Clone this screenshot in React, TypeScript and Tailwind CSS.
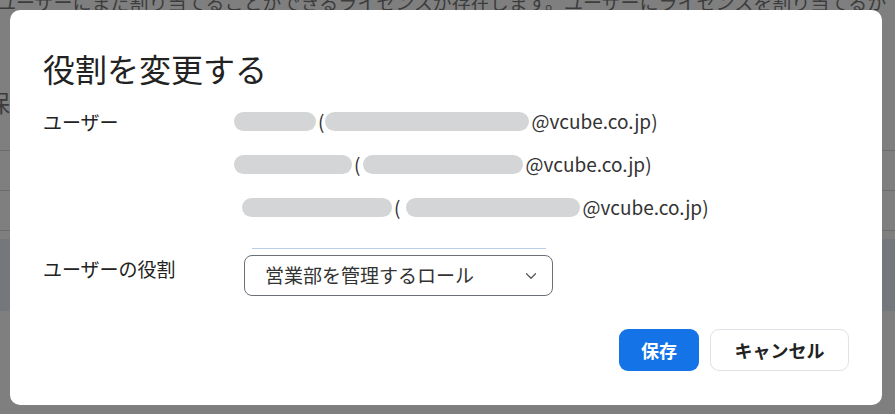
import { ChevronDown } from 'lucide-react';

// Dimmed page behind the dialog, then the "change role" dialog on top.

const font = { fontFamily: '"Noto Sans CJK JP", "Noto Sans", sans-serif' };

type UserRow = { indent: string; name: string; mail: string; gap: string };

const users: UserRow[] = [
  { indent: 'ml-[1px]', name: 'w-[82px]', mail: 'w-[204px]', gap: 'ml-[1px]' },
  { indent: 'ml-[1px]', name: 'w-[118px]', mail: 'w-[160px]', gap: 'ml-[3px]' },
  { indent: 'ml-[9px]', name: 'w-[150px]', mail: 'w-[174px]', gap: 'ml-[6px]' },
];

function Pill({ width, extra = '' }: { width: string; extra?: string }) {
  return <span className={`inline-block h-[19px] rounded-full bg-[#d4d5d7] ${width} ${extra}`} />;
}

function Backdrop() {
  return (
    <div className="flex h-full flex-col text-[#3c3c3c]">
      <div className="-mt-[10px] -ml-[3px] whitespace-nowrap text-[19px] leading-[24px]">
        ユーザーにまだ割り当てることができるライセンスが存在します。ユーザーにライセンスを割り当てるか
      </div>
      <div className="mt-[74px] -ml-[14px] text-[24px] leading-[28px]">保存</div>
      <div className="mt-[34px] h-px bg-[#6c6c6c]" />
      <div className="mt-[39px] h-px bg-[#6c6c6c]" />
      <div className="mt-[39px] h-px bg-[#6c6c6c]" />
      <div className="mt-[8px] h-[72px] bg-[#74777b]" />
    </div>
  );
}

export default function App() {
  return (
    <div className="relative h-[414px] w-[895px] overflow-hidden bg-[#7f7f7f]" style={font}>
      <Backdrop />

      <div className="absolute left-[10px] top-[10px] flex h-[395px] w-[872px] flex-col rounded-[10px] bg-white px-[33px] pt-[38px] text-[#222]">
        <h1 className="text-[32px] leading-[40px] font-normal">役割を変更する</h1>

        <div className="mt-[12px] flex">
          <div className="w-[190px] text-[19px] leading-[43px] text-[#222]">ユーザー</div>
          <div className="flex flex-col">
            {users.map((u, i) => (
              <div key={i} className={`flex h-[43px] items-center text-[19px] text-[#333] ${u.indent}`}>
                <Pill width={u.name} />
                <span className="ml-[2px]">(</span>
                <Pill width={u.mail} extra={u.gap} />
                <span className="ml-[2px]">@vcube.co.jp)</span>
              </div>
            ))}
          </div>
        </div>

        <div className="ml-[209px] mt-[19px] h-px w-[294px] bg-[#b9cde6]" />

        <div className="mt-[6px] flex items-start">
          <div className="w-[201px] pt-[2px] text-[19px] leading-[24px] text-[#222]">ユーザーの役割</div>
          <div className="flex h-[41px] w-[309px] items-center justify-between rounded-[8px] border border-[#6b6f76] pl-[20px] pr-[12px]">
            <span className="text-[19px] text-[#333]">営業部を管理するロール</span>
            <ChevronDown className="h-[18px] w-[18px] text-[#555]" strokeWidth={1.6} />
          </div>
        </div>

        <div className="mt-[33px] flex justify-end gap-[11px]">
          <button className="h-[42px] w-[80px] rounded-[9px] bg-[#1473e6] text-[18px] font-bold text-white">
            保存
          </button>
          <button className="h-[42px] w-[139px] rounded-[9px] border border-[#e1e1e8] bg-white text-[18px] font-bold text-[#222]">
            キャンセル
          </button>
        </div>
      </div>
    </div>
  );
}
